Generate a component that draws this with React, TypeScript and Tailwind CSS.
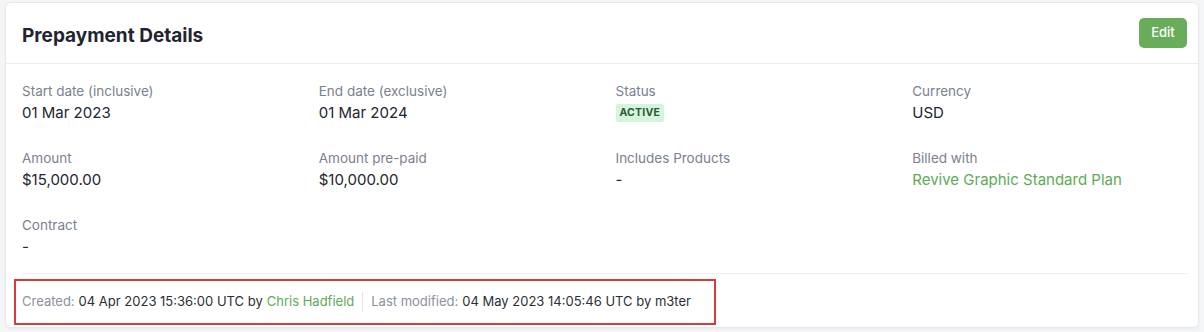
import React from "react";

const fields = [
  { label: "Start date (inclusive)", value: "01 Mar 2023" },
  { label: "End date (exclusive)", value: "01 Mar 2024" },
  { label: "Status", value: "ACTIVE", badge: true },
  { label: "Currency", value: "USD" },
  { label: "Amount", value: "$15,000.00" },
  { label: "Amount pre-paid", value: "$10,000.00" },
  { label: "Includes Products", value: "-" },
  { label: "Billed with", value: "Revive Graphic Standard Plan", link: true },
  { label: "Contract", value: "-" },
];

export default function App() {
  return (
    <main
      className="w-[1204px] h-[332px] bg-[#f4f5f7] pt-[2px] px-[5px]"
      style={{ fontFamily: "Inter, 'Noto Sans', sans-serif" }}
    >
      {/* Card */}
      <section className="bg-white border border-[#e6e8ec] rounded-[6px] shadow-[0_1px_2px_rgba(0,0,0,0.04)] h-[326px] flex flex-col">
        {/* Header */}
        <div className="h-[61px] flex items-center justify-between pl-4 pr-[11px] border-b border-[#eceef2]">
          <h1 className="text-[19px] font-bold text-[#1f2430] mt-[7px]">Prepayment Details</h1>
          <button className="h-[30px] w-[48px] bg-[#69ad5b] text-white text-[13px] font-medium rounded-[5px]">
            Edit
          </button>
        </div>

        {/* Body */}
        <div className="pl-4 pr-[11px] pt-[18px]">
          <div className="grid grid-cols-4 gap-x-[22px] gap-y-[26px]">
            {fields.map((f) => (
              <div key={f.label} className="flex flex-col">
                <span className="text-[13.5px] leading-[18px] text-[#7a8191]">{f.label}</span>
                {f.badge ? (
                  <span className="mt-[4px] self-start bg-[#d4f5dc] text-[#2c5a37] text-[10.5px] font-bold leading-[18px] px-[4px] rounded-[2px] tracking-[0.2px]">
                    {f.value}
                  </span>
                ) : (
                  <span
                    className={`mt-[3px] text-[15px] leading-[20px] ${f.link ? "text-[#5dab55]" : "text-[#22262e]"}`}
                  >
                    {f.value}
                  </span>
                )}
              </div>
            ))}
          </div>

          {/* Footer */}
          <div className="mt-[16px] border-t border-[#eceef2] pt-[5px]">
            <div className="-ml-[8px] w-[702px] h-[46px] border-2 border-[#d93a3a] flex items-center pl-[6px] text-[13px] text-[#2a2f38]">
              <span className="text-[#8a909e]">Created:</span>
              <span className="ml-[4px]">04 Apr 2023 15:36:00 UTC by</span>
              <span className="ml-[4px] text-[#5dab55]">Chris Hadfield</span>
              <span className="mx-[8px] h-[20px] border-l border-[#dfe2e7]" />
              <span className="text-[#8a909e]">Last modified:</span>
              <span className="ml-[4px]">04 May 2023 14:05:46 UTC by m3ter</span>
            </div>
          </div>
        </div>
      </section>
    </main>
  );
}
